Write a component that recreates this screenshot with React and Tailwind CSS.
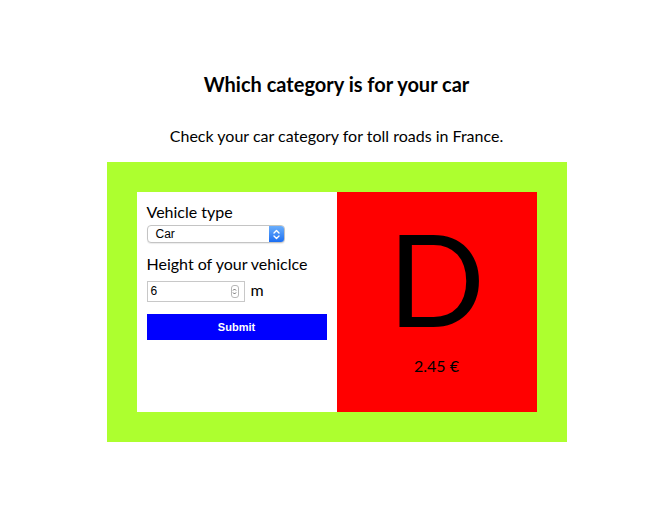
export default function App() {
  return (
    <div className="min-h-screen bg-white pl-px pt-[72px] font-['Lato',sans-serif] text-black">
      {/* Title */}
      <h2 className="text-center text-[20px] font-bold leading-[24px]">
        Which category is for your car
      </h2>
      <p className="mt-[30px] text-center text-[16px] leading-[19px]">
        Check your car category for toll roads in France.
      </p>

      {/* Card */}
      <div className="mx-auto mt-[17px] flex w-[460px] bg-[#adff2f] p-[30px]">
        {/* Form */}
        <div className="flex h-[220px] w-[200px] flex-col bg-white px-[10px] pt-[10px]">
          <label className="text-[16px] leading-[19px]">Vehicle type</label>
          <div className="mt-[4px] flex h-[18px] w-[138px] items-stretch overflow-hidden rounded-[4px] border border-[#c4c4c4] bg-white shadow-[0_1px_1px_rgba(0,0,0,0.08)]">
            <span className="flex-1 pl-[8px] font-['Liberation_Sans',sans-serif] text-[12px] leading-[16px]">
              Car
            </span>
            <span className="flex w-[15px] items-center justify-center bg-gradient-to-b from-[#6aaefb] to-[#1a6ef2]">
              <svg width="7" height="11" viewBox="0 0 7 11" fill="none" stroke="white" strokeWidth="1.4" strokeLinecap="round" strokeLinejoin="round">
                <path d="M1 4 L3.5 1.5 L6 4" />
                <path d="M1 7 L3.5 9.5 L6 7" />
              </svg>
            </span>
          </div>

          <label className="mt-[11px] text-[16px] leading-[19px]">
            Height of your vehiclce
          </label>
          <div className="mt-[7px] flex items-center gap-[6px]">
            <div className="flex h-[21px] w-[98px] items-center border border-[#c8c8c8] bg-white pl-[3px] pr-[5px]">
              <span className="flex-1 font-['Liberation_Sans',sans-serif] text-[12px]">6</span>
              <span className="flex h-[13px] w-[8px] items-center justify-center rounded-[3px] border border-[#b8b8b8]">
                <svg width="5" height="9" viewBox="0 0 5 9" fill="none" stroke="#555" strokeWidth="0.9">
                  <path d="M1 3.5 L2.5 2 L4 3.5" />
                  <path d="M1 5.5 L2.5 7 L4 5.5" />
                </svg>
              </span>
            </div>
            <span className="pb-[3px] text-[16px] leading-[19px]">m</span>
          </div>

          <button className="mt-[12px] h-[26px] w-[180px] bg-[#0000ff] font-['Liberation_Sans',sans-serif] text-[11px] font-bold text-white">
            Submit
          </button>
        </div>

        {/* Result */}
        <div className="flex h-[220px] w-[200px] flex-col items-center bg-[#ff0000] pt-[22px]">
          <span className="text-[128px] leading-none">D</span>
          <span className="mt-[14px] text-[16px] leading-[19px]">2.45 €</span>
        </div>
      </div>
    </div>
  );
}
